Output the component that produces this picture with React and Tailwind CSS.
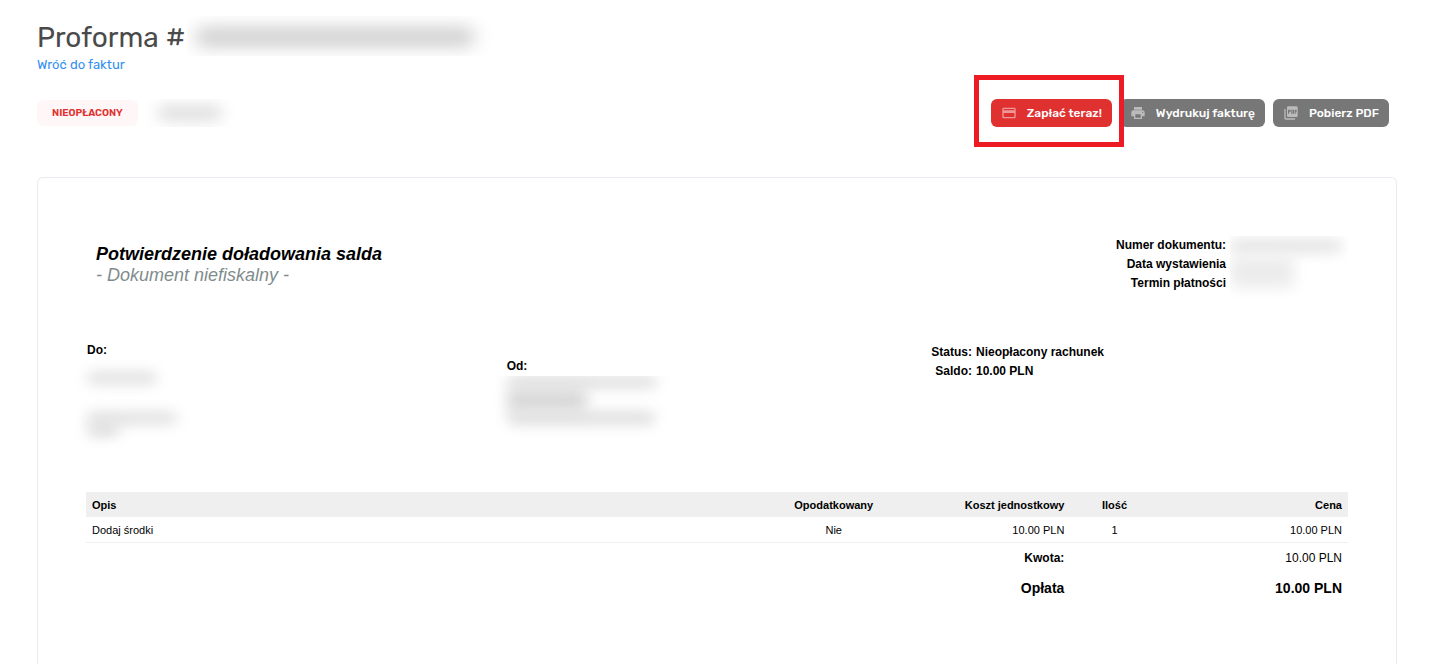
import React from "react";
import { MdCreditCard, MdPictureAsPdf, MdPrint } from "react-icons/md";
import { clsx } from "clsx";

const items = [{ name: "Dodaj środki", taxed: "Nie", unit: "10.00 PLN", qty: 1, price: "10.00 PLN" }];

// Private data is hidden behind blurred bars
const Redacted = ({ className, bars }) => (
  <div aria-hidden="true" className={clsx("overflow-hidden", className)}>
    {bars.map((bar, i) => (
      <div key={i} className={bar} />
    ))}
  </div>
);

const ActionButton = ({ icon: Icon, color, children }) => (
  <button type="button" className={clsx("flex h-7 items-center gap-2.5 rounded-md px-2.5 text-xs font-medium text-white", color)}>
    <Icon className="h-4 w-4 text-white/50" />
    {children}
  </button>
);

const PageHeader = () => (
  <header>
    <div className="flex h-[41px] items-start">
      <h1 className="pt-1.5 text-[28px] leading-8 text-[#4a4a4a]">Proforma #</h1>
      <Redacted
        className="ml-0.5 h-10 w-80"
        bars={["ml-2 mt-3 h-[18px] w-[280px] rounded-full bg-[#cacaca] blur-[9px]"]}
      />
    </div>
    <a href="#faktury" className="block text-[13px] leading-4 text-[#3390f0]">
      Wróć do faktur
    </a>
  </header>
);

const ActionBar = () => (
  <div className="mt-[26px] flex items-center justify-between pr-2">
    <div className="flex items-center gap-1">
      <span className="rounded-md bg-[#fff7f7] px-[15px] text-[10px] leading-[26px] font-semibold text-[#e03131]">NIEOPŁACONY</span>
      <Redacted className="h-7 w-24" bars={["ml-4 mt-2 h-3 w-16 rounded-full bg-[#d4d4d4] blur-[8px]"]} />
    </div>
    <div className="flex gap-2">
      <div className="relative">
        <ActionButton icon={MdCreditCard} color="bg-[#e03131]">Zapłać teraz!</ActionButton>
        <div className="pointer-events-none absolute -top-6 -right-3 -bottom-5 -left-[17px] z-10 border-[5px] border-[#ed1c24]" />
      </div>
      <ActionButton icon={MdPrint} color="bg-[#777777]">Wydrukuj fakturę</ActionButton>
      <ActionButton icon={MdPictureAsPdf} color="bg-[#777777]">Pobierz PDF</ActionButton>
    </div>
  </div>
);

const DocumentInfo = () => (
  <div className="flex items-start justify-between">
    <div className="pl-2.5 pt-2 text-lg leading-[21px] italic">
      <h2 className="font-bold">Potwierdzenie doładowania salda</h2>
      <p className="text-[#7f8c8d]">- Dokument niefiskalny -</p>
    </div>
    <div className="flex gap-1">
      <div className="text-right text-xs leading-[19px] font-bold">
        <p>Numer dokumentu:</p>
        <p>Data wystawienia</p>
        <p>Termin płatności</p>
      </div>
      <Redacted
        className="h-16 w-[118px]"
        bars={[
          "mt-1 h-3 w-28 rounded-md bg-[#e0e0e0] blur-[7px]",
          "mt-1 h-8 w-16 rounded-md bg-[#ececec] blur-[7px]",
        ]}
      />
    </div>
  </div>
);

const Parties = () => (
  <div className="mt-[41px] grid h-[151px] grid-cols-3 text-xs leading-[19px]">
    <div className="pl-px">
      <p className="font-bold">Do:</p>
      <Redacted
        className="-ml-3 h-24 w-32 pl-3"
        bars={[
          "mt-3 h-3 w-[70px] rounded-md bg-[#dedede] blur-[7px]",
          "mt-7 h-3 w-[90px] rounded-md bg-[#dedede] blur-[7px]",
          "h-3 w-8 rounded-md bg-[#d9d9d9] blur-[7px]",
        ]}
      />
    </div>
    <div className="pt-4">
      <p className="font-bold">Od:</p>
      <Redacted
        className="-ml-3 h-18 w-48 pl-3"
        bars={[
          "h-3 w-[150px] rounded-md bg-[#dddddd] blur-[7px]",
          "h-6 w-20 rounded-md bg-[#d9d9d9] blur-[7px]",
          "h-3 w-[148px] rounded-md bg-[#dadada] blur-[7px]",
        ]}
      />
    </div>
    <dl className="grid auto-rows-min grid-cols-[auto_1fr] gap-x-1 pt-0.5 pl-1 font-bold">
      <dt className="text-right">Status:</dt>
      <dd>Nieopłacony rachunek</dd>
      <dt className="text-right">Saldo:</dt>
      <dd>10.00 PLN</dd>
    </dl>
  </div>
);

const ItemsTable = () => (
  <table className="w-full table-fixed text-[11px]">
    <colgroup>
      <col className="w-[54%]" />
      <col className="w-[10.5%]" />
      <col className="w-[13.5%]" />
      <col className="w-[7%]" />
      <col className="w-[15%]" />
    </colgroup>
    <thead>
      <tr className="h-[25px] bg-[#efefef]">
        <th className="px-1.5 pt-0.5 text-left">Opis</th>
        <th className="pt-0.5 text-center">Opodatkowany</th>
        <th className="px-1.5 pt-0.5 text-right">Koszt jednostkowy</th>
        <th className="pt-0.5 text-center">Ilość</th>
        <th className="px-1.5 pt-0.5 text-right">Cena</th>
      </tr>
    </thead>
    <tbody>
      {items.map((item) => (
        <tr key={item.name} className="h-[25px] border-b border-[#efefef]">
          <td className="px-1.5 pt-0.5">{item.name}</td>
          <td className="pt-0.5 text-center">{item.taxed}</td>
          <td className="px-1.5 pt-0.5 text-right">{item.unit}</td>
          <td className="pt-0.5 text-center">{item.qty}</td>
          <td className="px-1.5 pt-0.5 text-right">{item.price}</td>
        </tr>
      ))}
    </tbody>
    <tfoot>
      <tr className="h-[31px] text-xs">
        <th colSpan={3} className="px-1.5 text-right">Kwota:</th>
        <td colSpan={2} className="px-1.5 text-right">10.00 PLN</td>
      </tr>
      <tr className="h-[30px] text-sm font-bold">
        <th colSpan={3} className="px-1.5 text-right">Opłata</th>
        <td colSpan={2} className="px-1.5 text-right">10.00 PLN</td>
      </tr>
    </tfoot>
  </table>
);

const App = () => (
  <div className="flex min-h-screen flex-col bg-white pt-4 pr-[38px] pl-[37px] font-['Rubik',Roboto,sans-serif]">
    <PageHeader />
    <ActionBar />
    <main className="mt-[50px] flex-1 rounded-t-md border border-b-0 border-[#e9eaf0] px-12 pt-[58px] pb-12 font-['Liberation_Sans',Arial,sans-serif] text-black">
      <DocumentInfo />
      <Parties />
      <ItemsTable />
    </main>
  </div>
);

export default App;
